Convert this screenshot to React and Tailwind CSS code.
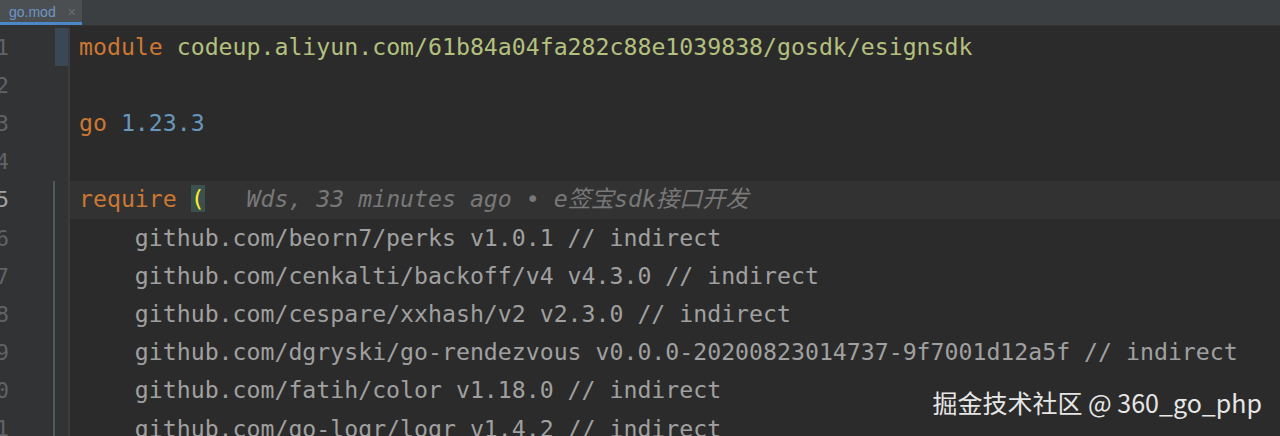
const mono = { fontFamily: '"DejaVu Sans Mono", "Liberation Mono", "Noto Sans CJK SC", monospace' };

const lines = [
  [<span className="text-[#cc7832]">module</span>, ' ', <span className="text-[#b4c07e]">codeup.aliyun.com/61b84a04fa282c88e1039838/gosdk/esignsdk</span>],
  [],
  [<span className="text-[#cc7832]">go</span>, ' ', <span className="text-[#6897bb]">1.23.3</span>],
  [],
  [
    <span className="text-[#cc7832]">require</span>,
    ' ',
    <span className="bg-[#3b514d] text-[#ffef28]">(</span>,
    <span className="italic text-[#787878]">{'   Wds, 33 minutes ago • e签宝sdk接口开发'}</span>,
  ],
  ['    github.com/beorn7/perks v1.0.1 // indirect'],
  ['    github.com/cenkalti/backoff/v4 v4.3.0 // indirect'],
  ['    github.com/cespare/xxhash/v2 v2.3.0 // indirect'],
  ['    github.com/dgryski/go-rendezvous v0.0.0-20200823014737-9f7001d12a5f // indirect'],
  ['    github.com/fatih/color v1.18.0 // indirect'],
  ['    github.com/go-logr/logr v1.4.2 // indirect'],
];

export default function App() {
  return (
    <div className="relative flex h-[436px] w-[1280px] flex-col overflow-hidden bg-[#2b2b2b]" style={mono}>
      <div className="flex h-[26px] shrink-0 border-b border-[#323232] bg-[#3c3f41]">
        <div className="flex w-[82px] items-center gap-[12px] border-b-[3px] border-[#4a88c7] bg-[#4b4f52] pl-[9px] pt-[2px]">
          <span className="text-[14px] text-[#6e95c6]" style={{ fontFamily: '"Liberation Sans", sans-serif' }}>go.mod</span>
          <span className="text-[14px] text-[#6b6e70]" style={{ fontFamily: '"Liberation Sans", sans-serif' }}>×</span>
        </div>
      </div>
      <div className="flex flex-1">
        <div className="relative flex w-[70px] shrink-0 bg-[#313335] pt-[2px]">
          <div className="flex w-[53px] flex-col items-start">
            {lines.map((_, i) => (
              <div
                key={i}
                className={`flex h-[38.2px] w-[9px] items-center justify-end overflow-hidden text-[22px] ${i === 4 ? 'text-[#a4a3a3]' : 'text-[#606366]'}`}
              >
                {i + 1}
              </div>
            ))}
          </div>
          <div className="flex w-[2px] flex-col">
            <div className="h-[153px]" />
            <div className="flex-1 bg-[#4d5b5c]" />
          </div>
          <div className="flex w-[13px] flex-col">
            <div className="h-[38px] bg-[#3a4856]" />
          </div>
          <div className="w-[2px] bg-[#3a3c3e]" />
        </div>
        <div className="flex-1 pl-[9px] pt-[2px]">
          {lines.map((parts, i) => (
            <div
              key={i}
              className={`-ml-[9px] flex h-[38.2px] items-center whitespace-pre pl-[9px] text-[23.2px] text-[#a0a0a0] ${i === 4 ? 'bg-[#323232]' : ''}`}
            >
              {parts.map((p, j) => (
                <span key={j}>{p}</span>
              ))}
            </div>
          ))}
        </div>
      </div>
      <div
        className="absolute right-[18px] top-[384px] text-[25px] text-[#e6e6e6]"
        style={{ fontFamily: '"Noto Sans CJK SC", "Noto Sans", sans-serif' }}
      >
        掘金技术社区 @ 360_go_php
      </div>
    </div>
  );
}
